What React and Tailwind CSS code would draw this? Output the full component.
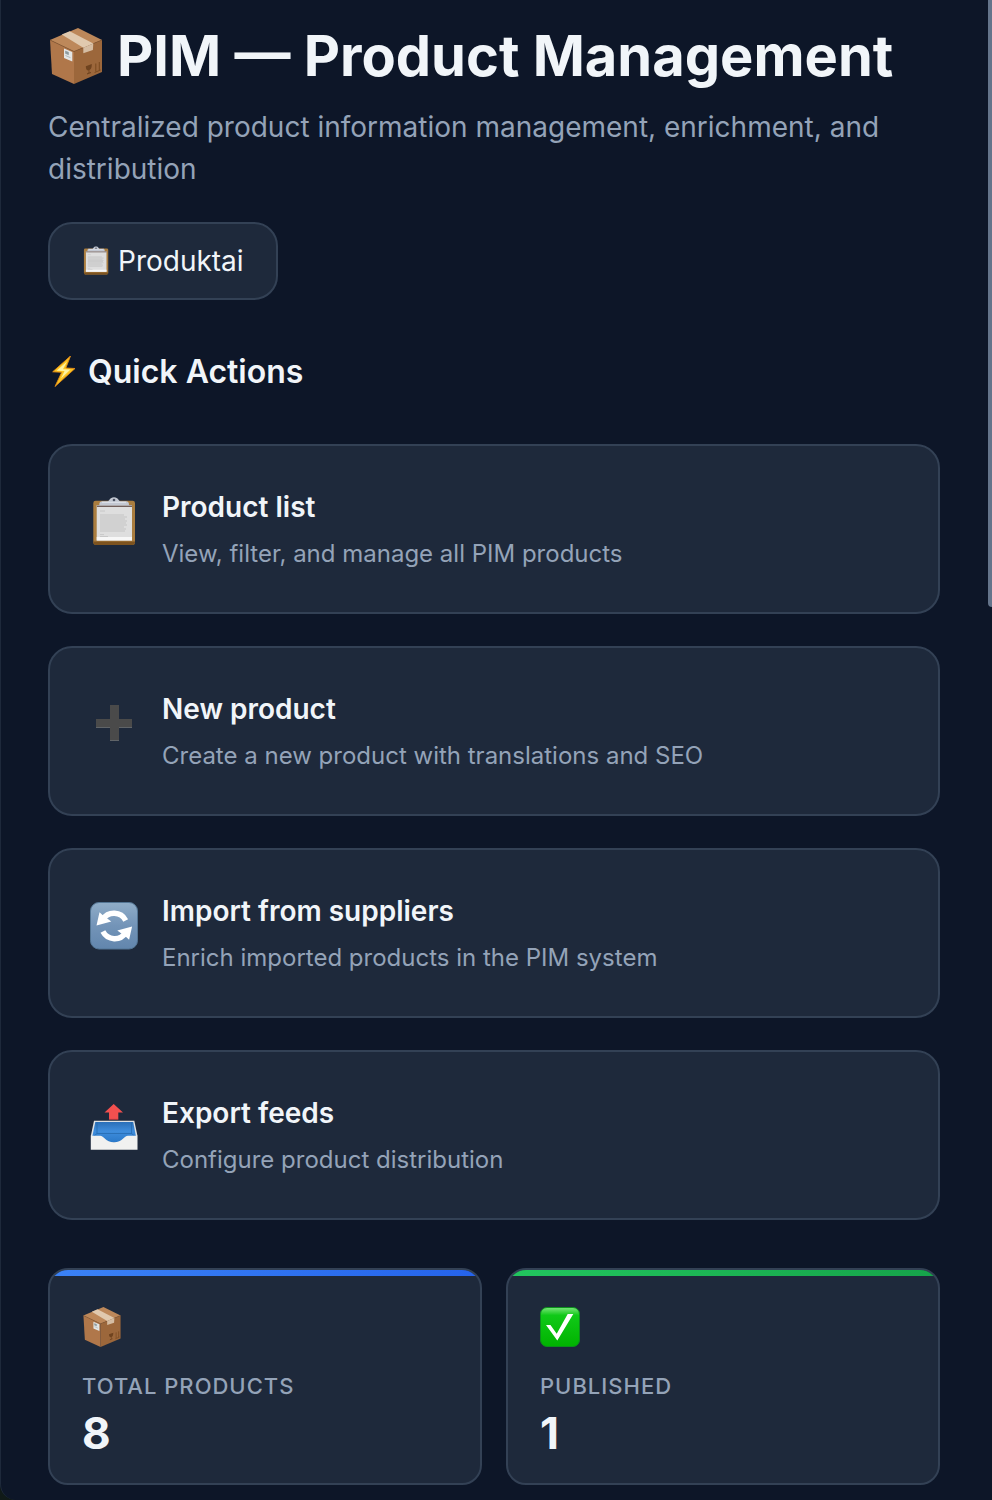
const BoxIcon = ({ className }) => (
    <svg viewBox="0 0 56 56" className={className} aria-hidden="true">
        <path d="M2 12 30 0l24 12-28 11.5z" fill="#bd885a" />
        <path d="M2 12 26 23.5V56L4 46z" fill="#b0774a" />
        <path d="M54 12 26 23.5V56l28-12z" fill="#9c673b" />
        <path d="M2 12 26 23.5 54 12" fill="none" stroke="#8a5a32" strokeWidth="0.7" />
        <path d="M13.7 6.6 21.7 3.2l23.6 12.3-10 4.2z" fill="#e0c9ae" />
        <path d="M35.3 19.7v5.6l9.6-3.3.4-6.5z" fill="#d5bda3" />
        <path d="M16 20.5l8.3 3.6v9.5L16 30z" fill="#e3e6e6" />
        <path d="M17.5 23l3 1.3v2.4l-3-1.3zM17.5 27.5l5 2.2" fill="#8d9a9e" stroke="#8d9a9e" strokeWidth="0.6" />
        <path d="M37.8 38.3l6-2.3c0 3.3-.6 5.3-2.4 6v2.4l1.6-.3v.8l-4 1.5v-.9l1.6-1v-1.9c-1.8.1-2.8-1.5-2.8-4.3z" fill="#6f431f" />
        <path d="M47.8 35.5v8M51.3 34v8M46.6 44.5l6-2.5" stroke="#79491f" strokeWidth="1" />
    </svg>
);

const ClipboardIcon = ({ className }) => (
    <svg viewBox="0 0 48 48" className={className} aria-hidden="true">
        <rect x="3.3" y="2.7" width="41.7" height="44.3" rx="2.4" fill="#aa7d3f" />
        <path d="M3.3 43.5h41.7v1.1a2.4 2.4 0 0 1-2.4 2.4H5.7a2.4 2.4 0 0 1-2.4-2.4z" fill="#7d531f" />
        <rect x="6.7" y="7" width="35.3" height="35.6" fill="#dedede" />
        <rect x="6.7" y="39" width="35.3" height="3.4" fill="#f7f7f7" />
        <path d="M7 8.3h35" stroke="#71605c" strokeWidth="1.6" />
        <path d="M10 13h5M10 38.5h8M10 36.6h4" stroke="#c2c2c2" strokeWidth="0.8" />
        <path d="M10 17h24M10 19h27M10 21h25M10 23h27M10 25h26M10 27h27M10 29h24M10 31h26M10 33h25" stroke="#c3c3c3" strokeWidth="1.2" />
        <path d="M9.3 7.2c0-3 .8-4 3-4h5.2c2 0 2-4 6.5-4s4.5 4 6.5 4H36c2.2 0 3 1 3 4z" fill="#c3c8d2" />
        <path d="M12 4.3h24" stroke="#e0e4ec" strokeWidth="1" />
        <circle cx="24" cy="2" r="1.3" fill="#4a5060" />
    </svg>
);

const PlusIcon = ({ className }) => (
    <svg viewBox="0 0 48 48" className={className} aria-hidden="true">
        <path d="M20 5h9v14h13v9H29v13h-9V28H6v-9h14z" fill="#4a4a4a" />
        <path d="M6 27.5h14M29 27.5h13M20 40.5h9" stroke="#606468" />
    </svg>
);

const RefreshIcon = ({ className }) => (
    <svg viewBox="0 0 48 48" className={className} aria-hidden="true">
        <defs>
            <linearGradient id="refreshFill" x1="0" y1="0" x2="0" y2="1">
                <stop offset="0" stopColor="#90adc8" />
                <stop offset="0.5" stopColor="#7394b8" />
                <stop offset="1" stopColor="#6286ad" />
            </linearGradient>
        </defs>
        <rect x="0.5" y="0.5" width="47" height="46.5" rx="8.5" fill="url(#refreshFill)" stroke="#537594" />
        <g id="refreshArrow">
            <path d="M12.8 17.5A13.2 13.2 0 0 1 35.7 18.4" fill="none" stroke="#fff" strokeWidth="5.4" />
            <path d="M6.5 23.4 9.5 10.3l3 2.7 8.8 6.6z" fill="#fff" />
        </g>
        <use href="#refreshArrow" transform="rotate(180 24.3 24)" />
    </svg>
);

const OutboxIcon = ({ className }) => (
    <svg viewBox="0 0 48 48" className={className} aria-hidden="true">
        <defs>
            <linearGradient id="trayFill" x1="0" y1="0" x2="0" y2="1">
                <stop offset="0" stopColor="#2a6fb8" />
                <stop offset="0.45" stopColor="#3f8ddc" />
                <stop offset="1" stopColor="#2a78c8" />
            </linearGradient>
        </defs>
        <path d="M4 16.7h40.300l3.200 15.300H.8z" fill="#dfe2e4" />
        <path d="M5.300 18h37.900l2.700 14-8 6.500H11L2.400 32z" fill="url(#trayFill)" />
        <path d="M7 18v11.500h34.500V18M7 29.500 4 32M41.500 29.500l3 2.500" fill="none" stroke="#2467ab" strokeWidth="0.7" />
        <path d="M.8 31.800H10c4 0 5.500 6.500 14 6.500s10-6.500 14-6.500h9.500v14H.8z" fill="#f1f1f0" />
        <path d="M23.700 0 33 8.500h-4.700v6.800H19V8.500h-4.500z" fill="#f2504f" />
        <path d="M19 15.300h9.300" stroke="#cf3b3f" strokeWidth="0.8" />
    </svg>
);

const CheckIcon = ({ className }) => (
    <svg viewBox="0 0 40 40" className={className} aria-hidden="true">
        <defs>
            <linearGradient id="checkFill" x1="0" y1="0" x2="0" y2="1">
                <stop offset="0" stopColor="#7be57b" />
                <stop offset="0.2" stopColor="#10c918" />
                <stop offset="1" stopColor="#00b300" />
            </linearGradient>
        </defs>
        <rect x="0.5" y="0.5" width="39" height="39" rx="6.5" fill="url(#checkFill)" stroke="#0b8f1c" />
        <path d="M6 18h4.500l6.200 8.700L27.700 7h5.600l-16 26.500z" fill="#fff" />
    </svg>
);

const BoltIcon = ({ className }) => (
    <svg viewBox="0 0 32 32" className={className} aria-hidden="true">
        <path d="M22.500 0 4.700 15.800l9 .5L7 30.500l20-18-9.200-.5z" fill="#fcc421" stroke="#e08a16" strokeWidth="0.9" strokeLinejoin="round" />
        <path d="M19 5.500 8.500 14.800l8 .2-3.500 7.500 9.500-9-7.500-.3z" fill="#fff3a0" />
    </svg>
);

const actions = [
    { icon: ClipboardIcon, title: 'Product list', text: 'View, filter, and manage all PIM products' },
    { icon: PlusIcon, title: 'New product', text: 'Create a new product with translations and SEO' },
    { icon: RefreshIcon, title: 'Import from suppliers', text: 'Enrich imported products in the PIM system' },
    { icon: OutboxIcon, title: 'Export feeds', text: 'Configure product distribution' },
];

const stats = [
    { icon: BoxIcon, label: 'Total products', value: 8, bar: 'from-[#3b82f6] to-[#2563eb]' },
    { icon: CheckIcon, label: 'Published', value: 1, bar: 'from-[#22c55e] to-[#16a34a]' },
];

const App = () => (
    <div className="relative min-h-screen bg-[#101a18] font-['Inter',sans-serif] text-[#f1f5f9]">
        <main className="min-h-screen rounded-bl-2xl border-l border-[#1e293b] bg-[#0d1628] pt-[14px] pr-[52px] pb-[15px] pl-[47px]">
            <h1 className="flex items-center gap-[13px] text-[56px] leading-[84px] font-bold">
                <BoxIcon className="h-14 w-14 shrink-0" />
                PIM — Product Management
            </h1>
            <p className="mt-2 text-[28px] leading-[42px] text-[#94a3b8]">
                Centralized product information management, enrichment, and distribution
            </p>
            <button
                type="button"
                className="mt-8 flex items-center gap-2 rounded-3xl border-2 border-[#334155] bg-[#1e293b] px-8 py-4 text-[28px] leading-[42px]"
            >
                <ClipboardIcon className="h-7 w-7 overflow-visible" />
                Produktai
            </button>

            <h2 className="mt-12 flex items-center gap-2 text-[32px] leading-[48px] font-semibold">
                <BoltIcon className="h-8 w-8" />
                Quick Actions
            </h2>
            <div className="mt-12 flex flex-col gap-8">
                {actions.map(({ icon: Icon, title, text }) => (
                    <a
                        key={title}
                        href="#"
                        className="flex items-start gap-6 rounded-3xl border-2 border-[#334155] bg-[#1e293b] p-10"
                    >
                        <Icon className="my-3 h-12 w-12 shrink-0 overflow-visible" />
                        <div>
                            <h3 className="text-[28px] leading-[42px] font-semibold">{title}</h3>
                            <p className="mt-2 text-[24px] leading-[36px] text-[#94a3b8]">{text}</p>
                        </div>
                    </a>
                ))}
            </div>

            <div className="mt-12 grid grid-cols-2 gap-6">
                {stats.map(({ icon: Icon, label, value, bar }) => (
                    <div
                        key={label}
                        className="relative overflow-hidden rounded-[20px] border-2 border-[#334155] bg-[#1e293b] px-8 py-6"
                    >
                        <div className={`absolute inset-x-0 top-0 h-[6px] bg-linear-to-r ${bar}`} />
                        <Icon className="my-[13px] h-10 w-10" />
                        <div className="mt-[23px] text-[22px] leading-[33px] font-medium tracking-[1px] text-[#94a3b8] uppercase">
                            {label}
                        </div>
                        <div className="mt-1 text-[44px] leading-[52px] font-bold">{value}</div>
                    </div>
                ))}
            </div>
        </main>

        {/* scroll thumb */}
        <div className="absolute top-0 right-0 h-[607px] w-1 rounded-bl bg-[#64748b]" />
    </div>
);

export default App;
